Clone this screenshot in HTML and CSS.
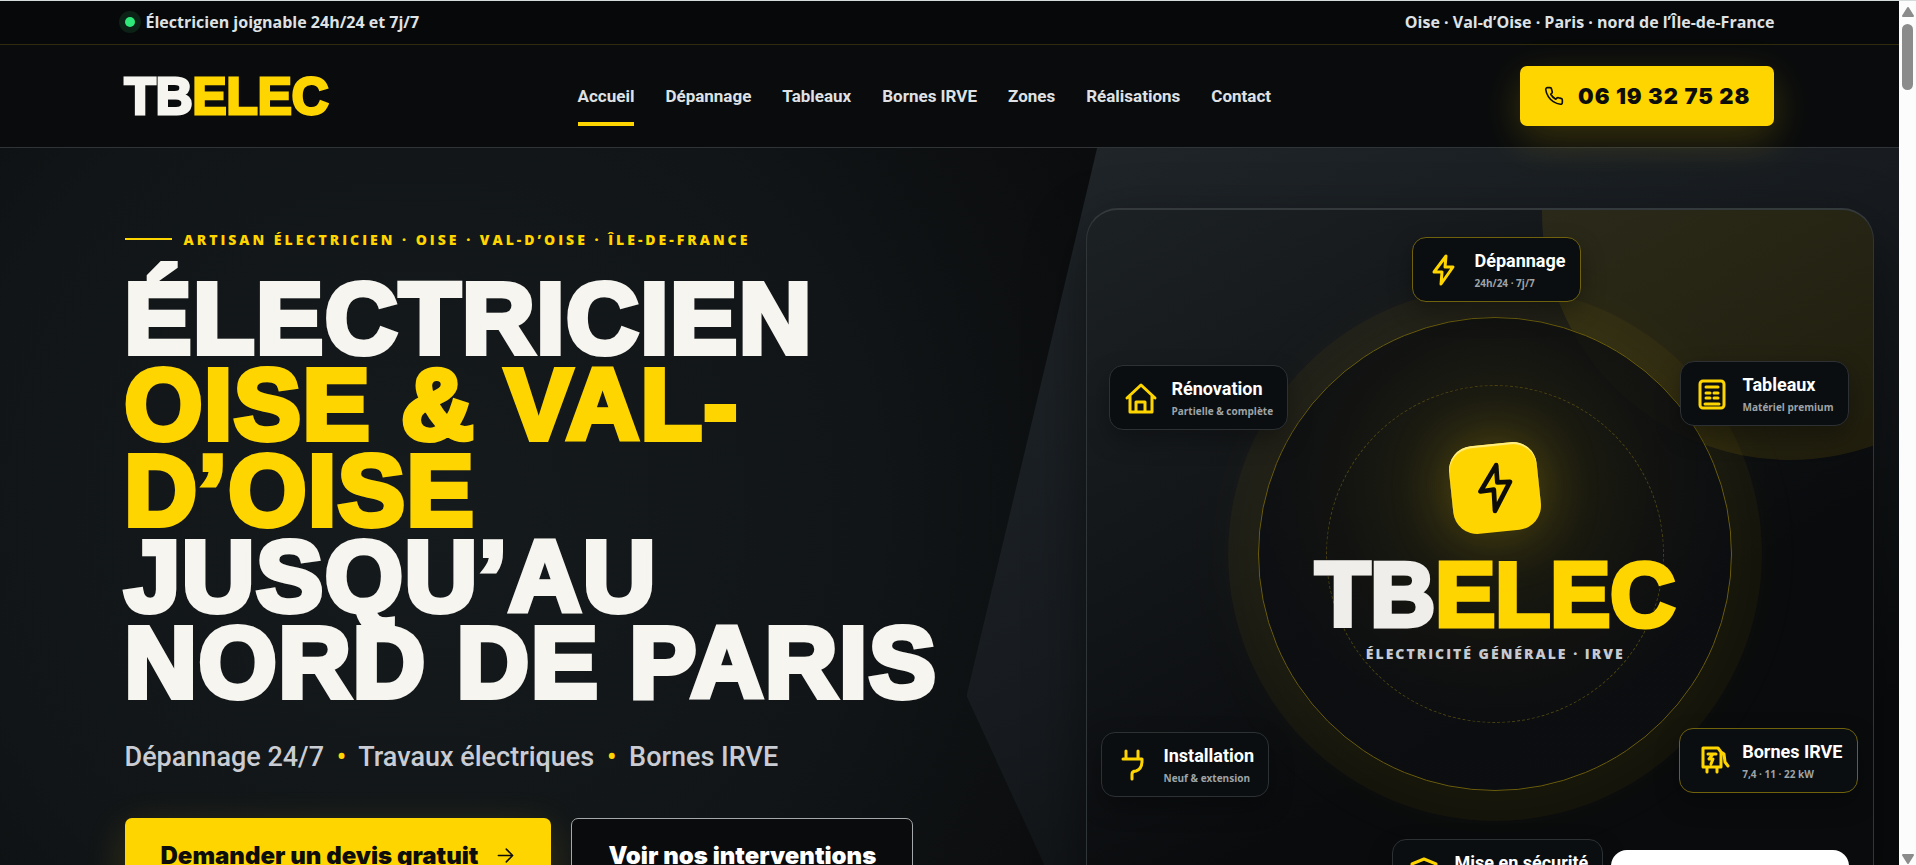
FILE: index.html
```
<!DOCTYPE html>
<html lang="fr">
<head>
    <meta charset="UTF-8">
    <meta name="viewport" content="width=device-width, initial-scale=1.0">
    <title>TBELEC - Électricien Oise &amp; Val-d'Oise</title>
    <link rel="stylesheet" href="styles.css">
</head>
<body>
    <div class="page">
        <div class="topbar">
            <div class="container">
                <span class="status"><i class="dot"></i>Électricien joignable 24h/24 et 7j/7</span>
                <span>Oise · Val-d’Oise · Paris · nord de l’Île-de-France</span>
            </div>
        </div>

        <header class="header">
            <div class="container">
                <a class="logo" href="#">TB<span>ELEC</span></a>
                <nav class="nav">
                    <a class="active" href="#">Accueil</a>
                    <a href="#">Dépannage</a>
                    <a href="#">Tableaux</a>
                    <a href="#">Bornes IRVE</a>
                    <a href="#">Zones</a>
                    <a href="#">Réalisations</a>
                    <a href="#">Contact</a>
                </nav>
                <a class="phone" href="tel:0619327528">
                    <svg viewBox="0 0 24 24"><path d="M22 16.9v3a2 2 0 0 1-2.2 2 19.8 19.8 0 0 1-8.6-3.1 19.5 19.5 0 0 1-6-6A19.8 19.8 0 0 1 2.1 4.2 2 2 0 0 1 4.1 2h3a2 2 0 0 1 2 1.7c.1 1 .4 1.9.7 2.8a2 2 0 0 1-.4 2.1L8.1 9.9a16 16 0 0 0 6 6l1.3-1.3a2 2 0 0 1 2.1-.4c.9.3 1.8.6 2.8.7a2 2 0 0 1 1.7 2z"/></svg>
                    06 19 32 75 28
                </a>
            </div>
        </header>

        <main class="hero">
            <div class="container">
                <section class="copy">
                    <p class="eyebrow">Artisan électricien · Oise · Val-d’Oise · Île-de-France</p>
                    <h1>ÉLECTRICIEN<br><span>OISE &amp; VAL-<br>D’OISE</span><br>JUSQU’AU<br>NORD DE PARIS</h1>
                    <p class="services">Dépannage 24/7 <i>•</i> Travaux électriques <i>•</i> Bornes IRVE</p>
                    <div class="actions">
                        <a class="btn btn-primary" href="#">Demander un devis gratuit
                            <svg viewBox="0 0 24 24"><path d="M3 12h18M13 4l8 8-8 8"/></svg>
                        </a>
                        <a class="btn btn-outline" href="#">Voir nos interventions</a>
                    </div>
                </section>

                <section class="board">
                    <div class="halo"></div>
                    <div class="ring"></div>
                    <div class="ring-dashed"></div>
                    <div class="brand">
                        <div class="bolt">
                            <svg viewBox="0 0 24 24"><path d="M12.500 2.200 5.800 13.500l5.700-.8.500 9.100 6.400-12.400-5.400.2z"/></svg>
                        </div>
                        <div class="brand-name"><b>TB</b><span>ELEC</span></div>
                        <p>Électricité générale · IRVE</p>
                    </div>

                    <div class="badge gold depannage">
                        <svg viewBox="0 0 30 30"><path d="M17 1 5 17h8l-1 12 12-17h-8z"/></svg>
                        <div><strong>Dépannage</strong><small>24h/24 · 7j/7</small></div>
                    </div>
                    <div class="badge renovation">
                        <svg viewBox="0 0 30 30"><path d="M1 15 15 2l14 13M4 13v16h22V13M10 29V19h9v10"/></svg>
                        <div><strong>Rénovation</strong><small>Partielle &amp; complète</small></div>
                    </div>
                    <div class="badge tableaux">
                        <svg viewBox="0 0 30 30"><rect x="3" y="2" width="24" height="27" rx="3"/><path d="M9 8h12M9 14h4M17 14h4M9 19h4M17 19h4M8 25h14"/></svg>
                        <div><strong>Tableaux</strong><small>Matériel premium</small></div>
                    </div>
                    <div class="badge installation">
                        <svg viewBox="0 0 30 30"><path d="M8 1v8M20 1v8M5 9h19v2c0 6-3 9-6 10-3 0-4 1-4 3v5"/></svg>
                        <div><strong>Installation</strong><small>Neuf &amp; extension</small></div>
                    </div>
                    <div class="badge gold bornes">
                        <svg viewBox="0 0 30 30"><path d="M7 21V2h15l3 4v15zM11 21v5M21 21v5M25 6l3 2 1 8 3 4M12 8h8M17 8l-4 5h4l-2 5"/></svg>
                        <div><strong>Bornes IRVE</strong><small>7,4 · 11 · 22 kW</small></div>
                    </div>
                    <div class="badge securite">
                        <svg viewBox="0 0 30 30"><path d="M15 2 27 7v8c0 7-5 11-12 14C8 26 3 22 3 15V7zM10 15l4 4 7-8"/></svg>
                        <div><strong>Mise en sécurité</strong><small>Diagnostic complet</small></div>
                    </div>
                    <div class="note"></div>
                </section>
            </div>
        </main>
    </div>

    <div class="scrollbar">
        <svg viewBox="0 0 12 10"><path d="M6 1 11 9H1z"/></svg>
        <div class="thumb"></div>
        <svg viewBox="0 0 12 10"><path d="M6 9 1 1h10z"/></svg>
    </div>
</body>
</html>
```
FILE: styles.css
```
* {
    box-sizing: border-box;
}
body {
    margin: 0;
    height: 100vh;
    display: flex;
    overflow: hidden;
    border-top: 1px solid #d5dbdb;
    background: #090b0c;
    color: #f6f5ef;
    font-family: "Open Sans", "Noto Sans", sans-serif;
}
p, h1 {
    margin: 0;
}
a {
    color: inherit;
    text-decoration: none;
}
svg {
    fill: none;
    stroke: currentColor;
    stroke-width: 2;
    stroke-linecap: round;
    stroke-linejoin: round;
    flex: none;
}
.page {
    flex: 1;
    min-width: 0;
    display: flex;
    flex-direction: column;
}
.container {
    width: 100%;
    max-width: 1650px;
    margin: 0 auto;
}

/* top bar */
.topbar {
    background: #060809;
    border-bottom: 1px solid #302b0d;
    font-size: 16px;
    font-weight: 700;
    line-height: 20px;
    color: #dfe2e5;
}
.topbar .container {
    display: flex;
    justify-content: space-between;
    align-items: center;
    height: 43px;
    padding-bottom: 2px;
}
.status {
    display: flex;
    align-items: center;
    gap: 11px;
}
.dot {
    width: 10px;
    height: 10px;
    border-radius: 50%;
    background: #2ee879;
    box-shadow: 0 0 0 6px #0c2216;
}

/* header */
.header {
    position: relative;
    z-index: 1;
    background: #090b0d;
    border-bottom: 1px solid #303436;
}
.header .container {
    display: flex;
    justify-content: space-between;
    align-items: center;
    height: 102px;
}
.logo {
    font: 700 51px "Liberation Sans", Arial, sans-serif;
    -webkit-text-stroke: 3px currentColor;
}
.logo span {
    color: #ffd500;
}
.nav {
    display: flex;
    gap: 31px;
    font: 700 17px/22px Roboto, sans-serif;
    color: #dfe1e4;
}
.nav a {
    padding: 18px 0 15px;
    border-bottom: 4px solid transparent;
}
.nav .active {
    border-color: #ffd500;
}
.phone {
    display: flex;
    align-items: center;
    gap: 14px;
    height: 60px;
    padding: 0 24px;
    border-radius: 7px;
    background: #ffd500;
    color: #0d0e0a;
    font: 900 22px Inter, sans-serif;
    letter-spacing: 1px;
    box-shadow: 0 12px 40px rgba(255, 213, 0, 0.2);
}
.phone svg {
    width: 20px;
    height: 20px;
}

/* hero */
.hero {
    position: relative;
    flex: 1;
    min-height: 0;
    overflow: hidden;
    background: radial-gradient(circle at 22% 50%, #151a1d 0, #111517 30%, #0a0b0c 52%);
}
.hero::before {
    content: "";
    position: absolute;
    top: 0;
    right: 0;
    width: 49.1%;
    height: 913px;
    background: linear-gradient(150deg, #20262a 0, #171b1f 40%, #090b0c 75%);
    clip-path: polygon(14% 0, 100% 0, 100% 100%, 18% 100%, 0 60%);
}
.hero .container {
    position: relative;
    display: grid;
    grid-template-columns: 861fr 689fr;
    gap: 100px;
    align-items: start;
}
.copy {
    padding-top: 81px;
}
.eyebrow {
    display: flex;
    align-items: center;
    gap: 12px;
    height: 20px;
    margin-bottom: 26px;
    color: #ffd500;
    font-size: 14px;
    font-weight: 800;
    letter-spacing: 3px;
    text-transform: uppercase;
}
.eyebrow::before {
    content: "";
    width: 47px;
    height: 2px;
    background: #ffd500;
}
h1 {
    font: 700 100px/86px "Liberation Sans", Arial, sans-serif;
    letter-spacing: 2px;
    -webkit-text-stroke: 6px currentColor;
    white-space: nowrap;
}
h1 span {
    color: #ffd500;
}
.services {
    margin: 34px 0 43px;
    color: #c9cdd3;
    font: 500 27px/36px Roboto, sans-serif;
}
.services i {
    margin: 0 6px;
    color: #ffd500;
    font-style: normal;
}
.actions {
    display: flex;
    gap: 20px;
}
.btn {
    display: flex;
    align-items: center;
    gap: 18px;
    height: 74px;
    padding: 0 36px;
    border-radius: 7px;
    font: 900 24px Inter, sans-serif;
}
.btn svg {
    width: 19px;
    height: 19px;
}
.btn-primary {
    background: #ffd500;
    color: #0d0e0a;
    box-shadow: 0 12px 40px rgba(255, 213, 0, 0.16);
}
.btn-outline {
    border: 1px solid #a5a8aa;
    background: #090b0c;
    color: #fff;
}

/* service board */
.board {
    position: relative;
    height: 690px;
    margin: 60px -99px 0 0;
    overflow: hidden;
    border: 1px solid #303538;
    border-top: 2px solid #34393b;
    border-radius: 32px;
    background: linear-gradient(150deg, #1c2124 0, #14171a 30%, #090b0d 65%);
    box-shadow: 0 20px 60px rgba(0, 0, 0, 0.45);
}
.halo {
    position: absolute;
    top: -246px;
    right: -165px;
    width: 496px;
    height: 496px;
    border-radius: 50%;
    background: rgba(255, 213, 0, 0.09);
}
.ring, .ring-dashed, .brand {
    position: absolute;
    top: 50%;
    left: 52%;
    transform: translate(-50%, -50%);
}
.ring {
    width: 474px;
    height: 474px;
    border: 1px solid #6b5d0b;
    border-radius: 50%;
    background: radial-gradient(circle at 50% 36%, rgba(58, 53, 12, 0.5) 0, rgba(18, 19, 16, 0.9) 42%, rgba(12, 14, 17, 0.8) 62%);
    box-shadow: 0 0 0 30px rgba(255, 213, 0, 0.04), 0 0 90px rgba(255, 213, 0, 0.06);
}
.ring-dashed {
    width: 338px;
    height: 338px;
    border: 1px dashed #4b4312;
    border-radius: 50%;
}
.brand {
    display: flex;
    flex-direction: column;
    align-items: center;
    white-space: nowrap;
}
.bolt {
    display: grid;
    place-items: center;
    width: 88px;
    height: 88px;
    margin-bottom: 18px;
    border-radius: 24px;
    background: #ffd500;
    color: #0c0d09;
    transform: rotate(-6deg);
    box-shadow: 0 0 60px rgba(255, 213, 0, 0.25), inset 0 2px 1px #fff08a;
}
.bolt svg {
    width: 56px;
    height: 56px;
    transform: rotate(6deg);
}
.brand-name {
    font: 700 90px/90px "Liberation Sans", Arial, sans-serif;
    -webkit-text-stroke: 5px currentColor;
    color: #ffd500;
}
.brand-name b {
    color: #efeeea;
}
.brand p {
    margin-top: 4px;
    color: #c6cad0;
    font-size: 14px;
    font-weight: 800;
    line-height: 20px;
    letter-spacing: 2px;
    text-transform: uppercase;
}
.badge {
    position: absolute;
    display: flex;
    align-items: center;
    gap: 14px;
    height: 65px;
    padding: 0 14px;
    border: 1px solid #2d3133;
    border-radius: 14px;
    background: #0a0e10;
    box-shadow: 0 10px 24px rgba(0, 0, 0, 0.3);
    white-space: nowrap;
}
.badge svg {
    width: 34px;
    height: 30px;
    color: #ffd500;
    stroke-width: 3;
    overflow: visible;
}
.badge strong {
    display: block;
    color: #fff;
    font: 700 18px/22px Roboto, sans-serif;
}
.badge small {
    display: block;
    margin-top: 4px;
    color: #9ea3a8;
    font-size: 10px;
    font-weight: 700;
    line-height: 14px;
}
.gold {
    border-color: #70620d;
}
.depannage {
    top: 27px;
    left: 325px;
}
.renovation {
    top: 155px;
    left: 22px;
}
.tableaux {
    top: 151px;
    right: 24px;
}
.installation {
    top: 522px;
    left: 14px;
}
.bornes {
    top: 518px;
    right: 15px;
}
.securite {
    top: 629px;
    left: 305px;
}
.note {
    position: absolute;
    top: 640px;
    right: 24px;
    width: 238px;
    height: 90px;
    border-radius: 16px;
    background: #fff;
}

/* scrollbar */
.scrollbar {
    display: flex;
    flex-direction: column;
    align-items: center;
    width: 17px;
    padding: 6px 0 1px;
    background: #fcfcfc;
}
.scrollbar svg {
    width: 12px;
    height: 10px;
    fill: #8b8b8b;
    stroke: #8b8b8b;
}
.thumb {
    width: 11px;
    height: 66px;
    margin: 7px 0 auto;
    border-radius: 6px;
    background: #8b8b8b;
}
```
